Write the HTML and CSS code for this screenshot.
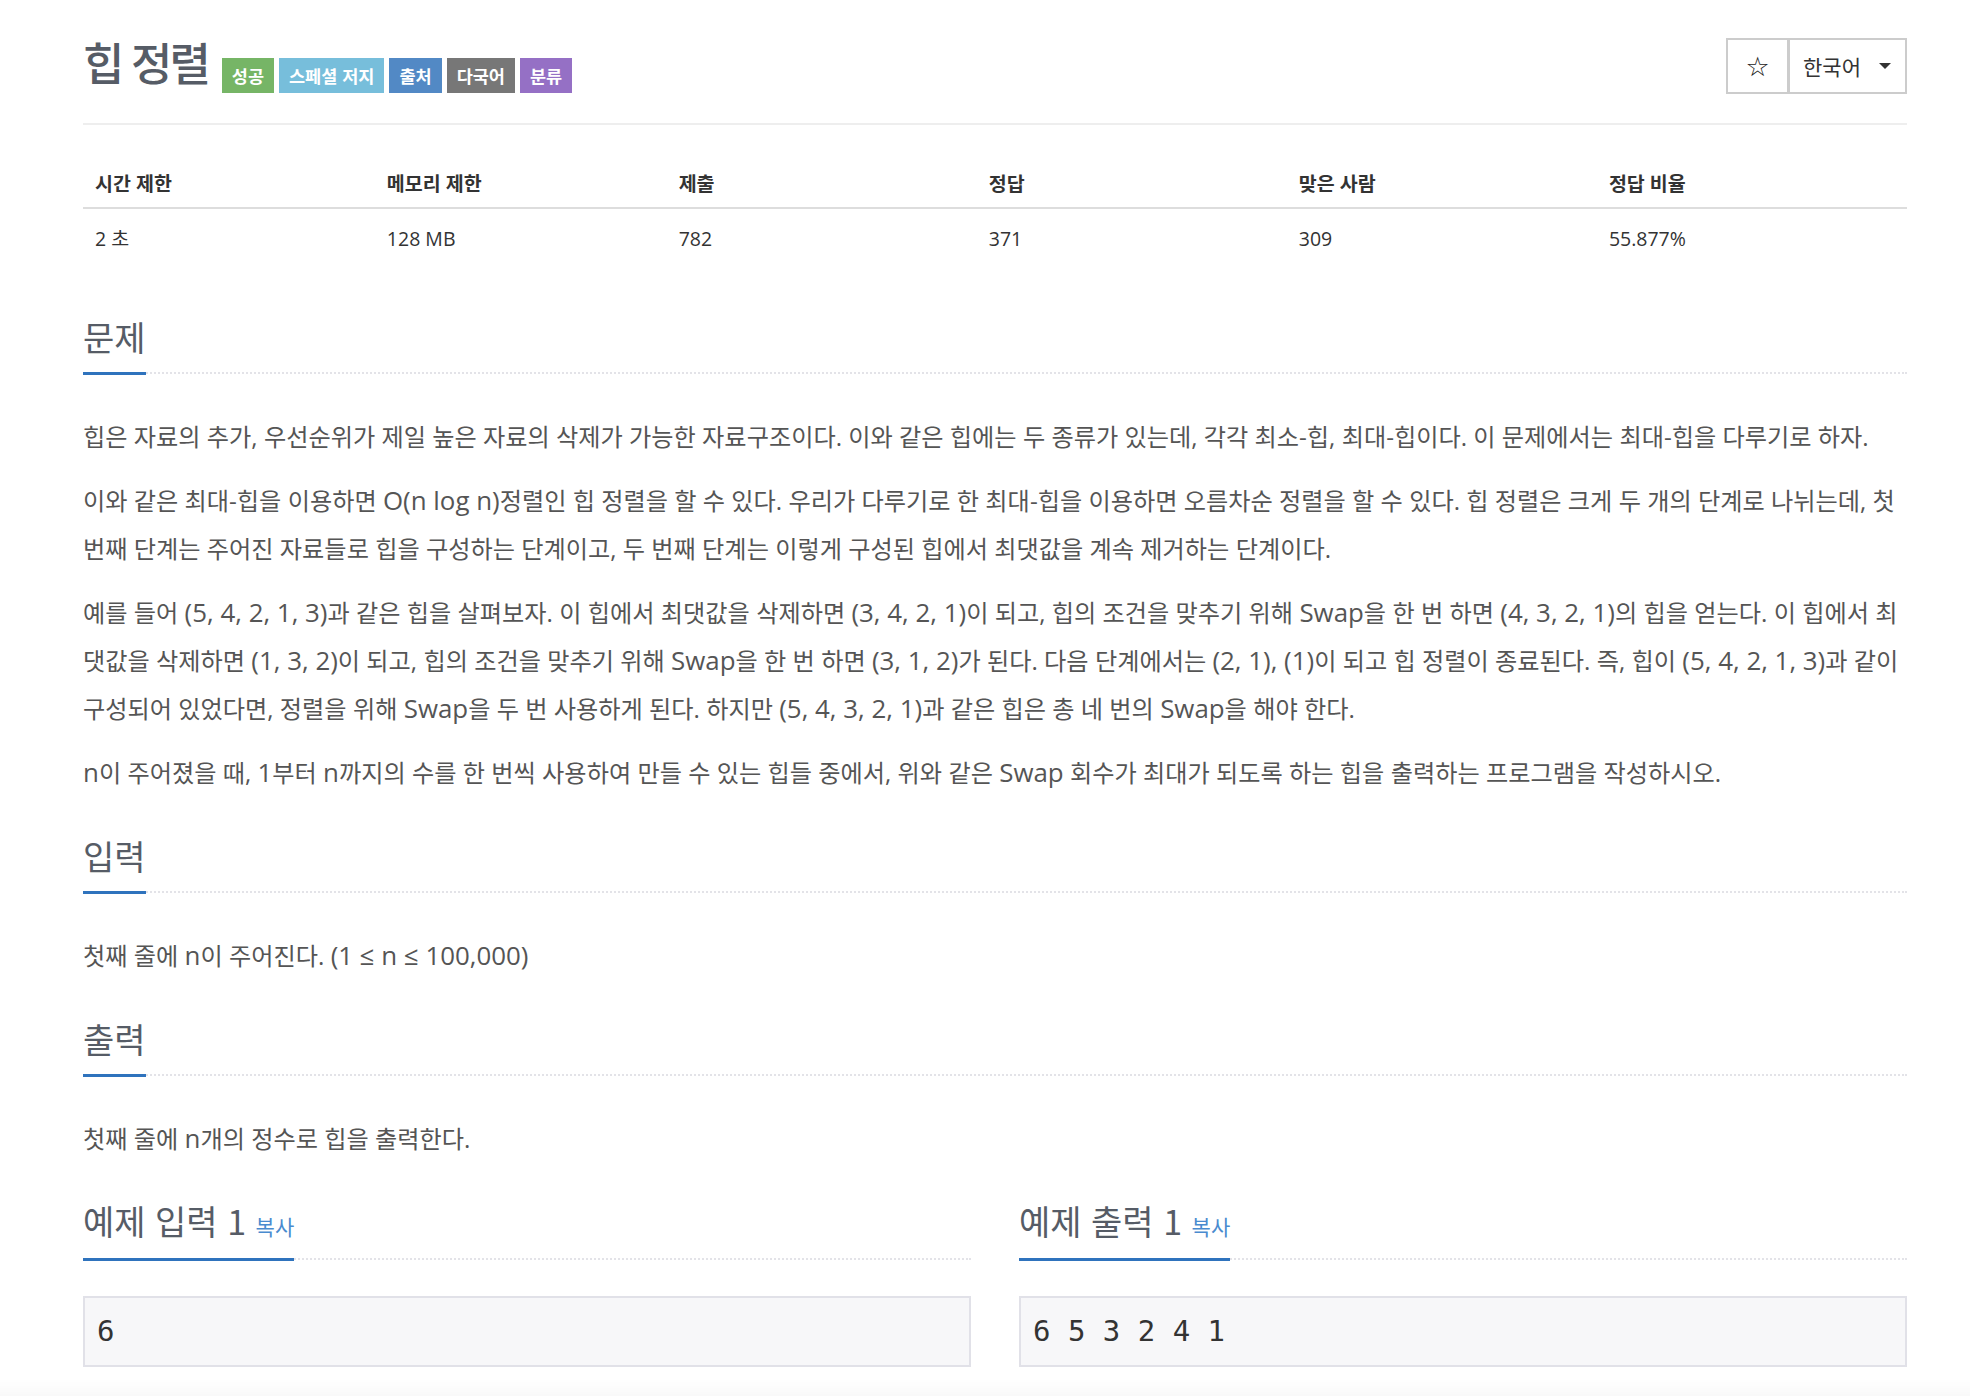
FILE: index.html
```html
<!DOCTYPE html>
<html lang="ko">
<head>
<meta charset="utf-8">
<title>힙 정렬</title>
<link rel="stylesheet" href="styles.css">
</head>
<body>
<div class="page">
  <div class="title-row">
    <div class="title-left">
      <h1 class="title">힙 정렬</h1>
      <div class="badges">
        <span class="badge b-green">성공</span>
        <span class="badge b-cyan">스페셜 저지</span>
        <span class="badge b-blue">출처</span>
        <span class="badge b-gray">다국어</span>
        <span class="badge b-purple">분류</span>
      </div>
    </div>
    <div class="btn-group">
      <span class="btn btn-star">☆</span>
      <span class="btn btn-lang">한국어<span class="caret"></span></span>
    </div>
  </div>

  <table class="info">
    <colgroup>
      <col class="c16"><col class="c16"><col class="c17"><col class="c17"><col class="c17"><col class="c17">
    </colgroup>
    <thead>
      <tr><th>시간 제한</th><th>메모리 제한</th><th>제출</th><th>정답</th><th>맞은 사람</th><th>정답 비율</th></tr>
    </thead>
    <tbody>
      <tr><td>2 초</td><td>128 MB</td><td>782</td><td>371</td><td>309</td><td>55.877%</td></tr>
    </tbody>
  </table>

  <section class="section">
    <div class="headline"><h2>문제</h2></div>
    <div class="problem-text">
      <p>힙은 자료의 추가, 우선순위가 제일 높은 자료의 삭제가 가능한 자료구조이다. 이와 같은 힙에는 두 종류가 있는데, 각각 최소-힙, 최대-힙이다. 이 문제에서는 최대-힙을 다루기로 하자.</p>
      <p>이와 같은 최대-힙을 이용하면 <span class="en">O(n log n)</span>정렬인 힙 정렬을 할 수 있다. 우리가 다루기로 한 최대-힙을 이용하면 오름차순 정렬을 할 수 있다. 힙 정렬은 크게 두 개의 단계로 나뉘는데, 첫 번째 단계는 주어진 자료들로 힙을 구성하는 단계이고, 두 번째 단계는 이렇게 구성된 힙에서 최댓값을 계속 제거하는 단계이다.</p>
      <p>예를 들어 <span class="en">(5, 4, 2, 1, 3)</span>과 같은 힙을 살펴보자. 이 힙에서 최댓값을 삭제하면 <span class="en">(3, 4, 2, 1)</span>이 되고, 힙의 조건을 맞추기 위해 <span class="en">Swap</span>을 한 번 하면 <span class="en">(4, 3, 2, 1)</span>의 힙을 얻는다. 이 힙에서 최댓값을 삭제하면 <span class="en">(1, 3, 2)</span>이 되고, 힙의 조건을 맞추기 위해 <span class="en">Swap</span>을 한 번 하면 <span class="en">(3, 1, 2)</span>가 된다. 다음 단계에서는 <span class="en">(2, 1), (1)</span>이 되고 힙 정렬이 종료된다. 즉, 힙이 <span class="en">(5, 4, 2, 1, 3)</span>과 같이 구성되어 있었다면, 정렬을 위해 <span class="en">Swap</span>을 두 번 사용하게 된다. 하지만 <span class="en">(5, 4, 3, 2, 1)</span>과 같은 힙은 총 네 번의 <span class="en">Swap</span>을 해야 한다.</p>
      <p><span class="en">n</span>이 주어졌을 때, <span class="en">1</span>부터 <span class="en">n</span>까지의 수를 한 번씩 사용하여 만들 수 있는 힙들 중에서, 위와 같은 <span class="en">Swap</span> 회수가 최대가 되도록 하는 힙을 출력하는 프로그램을 작성하시오.</p>
    </div>
  </section>

  <section class="section">
    <div class="headline"><h2>입력</h2></div>
    <div class="problem-text">
      <p>첫째 줄에 <span class="en">n</span>이 주어진다. <span class="en">(1 ≤ n ≤ 100,000)</span></p>
    </div>
  </section>

  <section class="section">
    <div class="headline"><h2>출력</h2></div>
    <div class="problem-text">
      <p>첫째 줄에 <span class="en">n</span>개의 정수로 힙을 출력한다.</p>
    </div>
  </section>

  <div class="samples">
    <section class="section sample">
      <div class="headline"><h2>예제 입력 1 <a class="copy">복사</a></h2></div>
      <pre class="sampledata">6</pre>
    </section>
    <section class="section sample">
      <div class="headline"><h2>예제 출력 1 <a class="copy">복사</a></h2></div>
      <pre class="sampledata">6 5 3 2 4 1</pre>
    </section>
  </div>
</div>
<div class="bottom-fade"></div>
</body>
</html>
```

FILE: styles.css
```css
html, body {
  margin: 0;
  padding: 0;
  background: #fff;
}
body {
  font-family: "Open Sans", "Noto Sans CJK KR", sans-serif;
  font-size: 17.5px;
  color: #333;
}
.page {
  padding: 37px 63px 0 83px;
}

/* title row */
.title-row {
  display: flex;
  justify-content: space-between;
  align-items: flex-start;
  padding-bottom: 29px;
  border-bottom: 2px solid #eee;
}
.title-left {
  display: flex;
  align-items: flex-start;
}
.title {
  margin: 0;
  font-family: "Noto Sans CJK KR", sans-serif;
  font-size: 45px;
  line-height: 50px;
  font-weight: 500;
  letter-spacing: -3px;
  color: #565c66;
}
.badges {
  display: flex;
  gap: 5px;
  margin-top: 21px;
  margin-left: 14px;
}
.badge {
  display: block;
  height: 35px;
  line-height: 35px;
  padding: 0 10px;
  font-family: "Noto Sans CJK KR", sans-serif;
  font-size: 17.5px;
  font-weight: 700;
  color: #fff;
}
.b-green { background: #76b566; }
.b-cyan { background: #77bedb; }
.b-blue { background: #5289c5; }
.b-gray { background: #777777; }
.b-purple { background: #9570c5; }

.btn-group {
  display: flex;
  margin-top: 1px;
}
.btn {
  display: flex;
  align-items: center;
  justify-content: center;
  height: 52px;
  border: 2px solid #ccc;
  color: #333;
  background: #fff;
  font-family: "Noto Sans CJK KR", sans-serif;
}
.btn-star {
  width: 59px;
  font-family: "DejaVu Sans", sans-serif;
  font-size: 27px;
  color: #222;
}
.btn-lang {
  box-sizing: border-box;
  width: 118px;
  height: 56px;
  border-left-width: 1px;
  font-size: 21px;
  justify-content: flex-start;
  padding-left: 13px;
}
.caret {
  display: block;
  width: 0;
  height: 0;
  margin-left: 18px;
  border-top: 6px solid #333;
  border-left: 6px solid transparent;
  border-right: 6px solid transparent;
}

/* info table */
.info {
  width: 100%;
  border-collapse: collapse;
  margin-top: 34px;
  margin-bottom: 56px;
  font-family: "Open Sans", "Noto Sans CJK KR", sans-serif;
  font-size: 19.5px;
  color: #333;
}
.c16 { width: 16%; }
.c17 { width: 17%; }
.info th {
  text-align: left;
  font-weight: 700;
  padding: 12px 12px 11px;
  line-height: 25px;
  border-bottom: 2px solid #ddd;
}
.info td {
  padding: 17px 12px 11px;
  line-height: 25px;
}

/* sections */
.section {
  margin-top: 40px;
}
.info + .section {
  margin-top: 0;
}
.headline {
  border-bottom: 2px dotted #e3e3e8;
}
.headline h2 {
  display: inline-block;
  margin: 0 0 -3px 0;
  padding-bottom: 16px;
  border-bottom: 3px solid #2f73bd;
  font-family: "Noto Sans CJK KR", sans-serif;
  font-size: 34px;
  line-height: 38px;
  font-weight: 400;
  color: #565c66;
}
.problem-text {
  margin-top: 39px;
  font-size: 24.2px;
  line-height: 48px;
  color: #555;
}
.problem-text p {
  margin: 0 0 16px 0;
}
.en {
  font-size: 1.07em;
  line-height: 1;
}
.copy {
  font-size: 21px;
  color: #4a8bcf;
  text-decoration: none;
}

/* samples */
.samples {
  display: flex;
  gap: 48px;
}
.sample {
  flex: 1;
  min-width: 0;
  margin-top: 23px;
}
.sample .headline h2 {
  padding-bottom: 13px;
}
.sampledata {
  margin: 36px 0 0 0;
  padding: 11px 12px;
  background: #f7f7f9;
  border: 2px solid #e1e1e8;
  font-family: "DejaVu Sans Mono", monospace;
  font-size: 29px;
  line-height: 45px;
  color: #333;
}

.bottom-fade {
  position: fixed;
  left: 0;
  right: 0;
  bottom: 0;
  height: 18px;
  background: linear-gradient(to bottom, rgba(0,0,0,0), rgba(0,0,0,0.025));
  pointer-events: none;
}
```
